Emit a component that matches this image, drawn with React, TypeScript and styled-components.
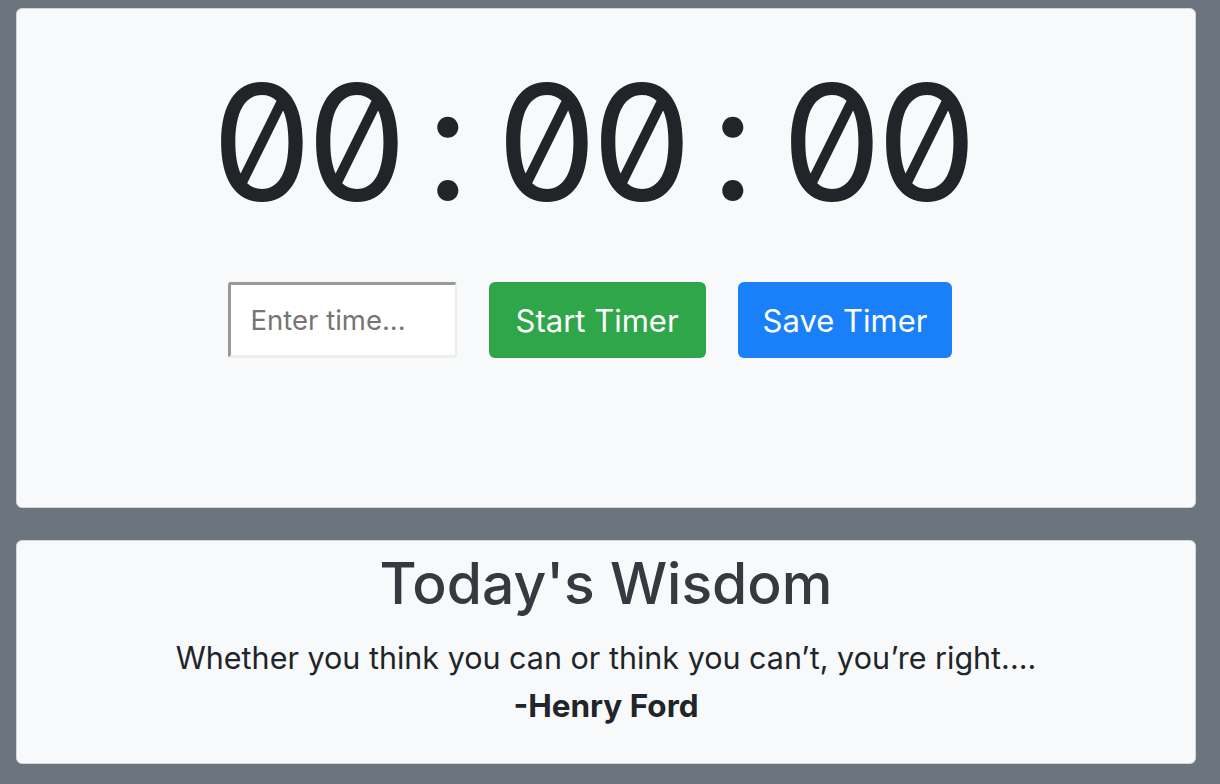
import React, { useState } from 'react';
import styled, { createGlobalStyle } from 'styled-components';

const GlobalStyle = createGlobalStyle`
  html, body {
    margin: 0;
    padding: 0;
    background: #6c757d;
  }
  body {
    font-family: Inter, "Noto Sans", sans-serif;
    color: #212529;
  }
`;

const QUOTE = {
  text: 'Whether you think you can or think you can’t, you’re right....',
  author: '-Henry Ford',
};

const App = () => {
  const [time, setTime] = useState('');
  const display = '00:00:00';

  return (
    <Page>
      <GlobalStyle />
      <TimerCard>
        <Clock>
          {display.split('').map((ch, index) => (
            <Digit key={index}>{ch}</Digit>
          ))}
        </Clock>
        <Controls>
          <TimeInput
            type="text"
            placeholder="Enter time..."
            value={time}
            onChange={e => setTime(e.target.value)}
          />
          <Button $variant="success">Start Timer</Button>
          <Button $variant="primary">Save Timer</Button>
        </Controls>
      </TimerCard>
      <WisdomCard>
        <Title>Today's Wisdom</Title>
        <Quote>{QUOTE.text}</Quote>
        <Author>{QUOTE.author}</Author>
      </WisdomCard>
    </Page>
  );
};

export default App;

const Page = styled.div`
  display: flex;
  flex-direction: column;
  gap: 32px;
  padding: 8px 24px 20px 16px;
  width: 1220px;
  box-sizing: border-box;
`;

const Card = styled.div`
  box-sizing: border-box;
  background: #f8f9fa;
  border: 1px solid #d3d6d9;
  border-radius: 6px;
  display: flex;
  flex-direction: column;
  align-items: center;
`;

const TimerCard = styled(Card)`
  height: 500px;
  padding-right: 32px;
`;

const WisdomCard = styled(Card)`
  height: 224px;
`;

const Clock = styled.div`
  display: flex;
  margin-top: 37px;
  font-family: Inter, sans-serif;
  font-feature-settings: 'zero' 1, 'tnum' 1;
  font-size: 160px;
  line-height: 192px;
  color: #212529;
`;

const Digit = styled.span`
  width: 95px;
  text-align: center;
`;

const Controls = styled.div`
  display: flex;
  align-items: center;
  gap: 32px;
  margin-top: 44px;
`;

const TimeInput = styled.input`
  width: 229px;
  height: 76px;
  box-sizing: border-box;
  padding: 0 20px;
  font-family: Inter, sans-serif;
  font-size: 27.5px;
  color: #212529;
  background: #fff;
  border-style: solid;
  border-width: 3px 2px 3px 3px;
  border-color: #999 #eee #eee #999;
  border-radius: 3px;
  outline: none;
  &::placeholder {
    color: #757575;
  }
`;

const Button = styled.button<{ $variant: 'success' | 'primary' }>`
  height: 76px;
  padding: 0 ${props => (props.$variant === 'success' ? 27 : 25)}px;
  border: none;
  border-radius: 6px;
  font-family: Inter, sans-serif;
  font-size: 31px;
  color: #fff;
  background: ${props => (props.$variant === 'success' ? '#30a64a' : '#1a80fa')};
  cursor: pointer;
`;

const Title = styled.h1`
  margin: 9px 0 0;
  font-size: 57px;
  font-weight: 500;
  line-height: 68px;
  color: #343a40;
`;

const Quote = styled.p`
  margin: 16px 0 0;
  font-size: 30.5px;
  line-height: 48px;
`;

const Author = styled.p`
  margin: 0;
  font-size: 31.5px;
  font-weight: 700;
  line-height: 48px;
`;
